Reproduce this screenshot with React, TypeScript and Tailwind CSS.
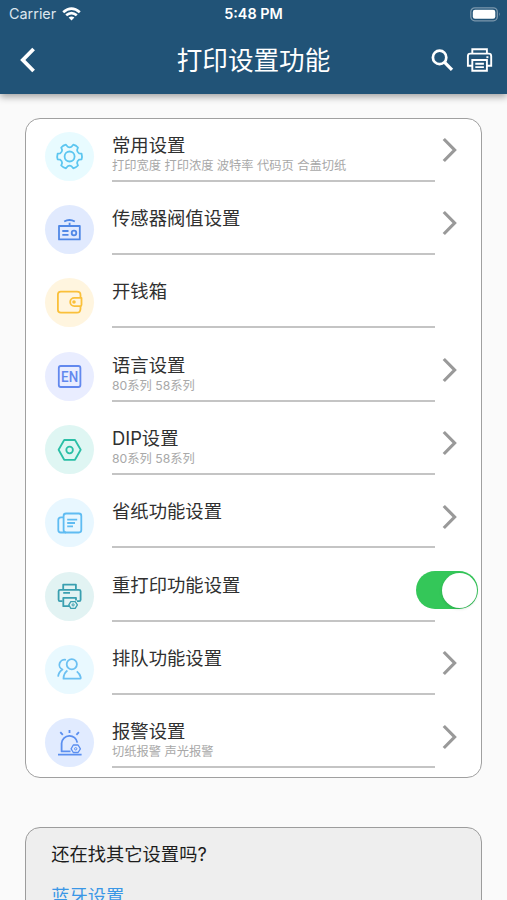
import type { ReactNode } from 'react';

type Row = {
  title: string;
  sub?: string;
  bg: string;
  color: string;
  icon: ReactNode;
  action?: 'arrow' | 'toggle';
};

// Closed outline of a six-toothed gear
function gearPath(cx: number, cy: number, outer: number, inner: number) {
  const pt = (deg: number, r: number) => {
    const a = (deg * Math.PI) / 180;
    return `${(cx + r * Math.cos(a)).toFixed(2)} ${(cy + r * Math.sin(a)).toFixed(2)}`;
  };
  let d = '';
  for (let i = 0; i < 6; i++) {
    const a = i * 60;
    d += `${i === 0 ? 'M' : 'L'}${pt(a - 19, inner)} L${pt(a - 13, outer)} Q${pt(a, outer + 0.5)} ${pt(a + 13, outer)} L${pt(a + 19, inner)} Q${pt(a + 30, inner - 1.2)} ${pt(a + 41, inner)} `;
  }
  return d + 'Z';
}

const ROWS: Row[] = [
  {
    title: '常用设置',
    sub: '打印宽度 打印浓度 波特率 代码页 合盖切纸',
    bg: 'bg-[#e8fbff]',
    color: 'text-[#5cc6f0]',
    action: 'arrow',
    icon: (
      <>
        <path d={gearPath(24.6, 24.5, 12.3, 9.9)} />
        <circle cx="24.6" cy="24.5" r="5" />
      </>
    ),
  },
  {
    title: '传感器阀值设置',
    bg: 'bg-[#e1eafe]',
    color: 'text-[#5088e6]',
    action: 'arrow',
    icon: (
      <>
        <rect x="14" y="21" width="20.8" height="13.4" />
        <path d="M19.2 16.6Q24.4 13.4 29.8 16.6M24.6 17.8V21M17.3 26H23.5M17.3 29.8H23.5" />
        <circle cx="29" cy="28" r="2.3" />
      </>
    ),
  },
  {
    title: '开钱箱',
    bg: 'bg-[#fff5df]',
    color: 'text-[#fac03a]',
    icon: (
      <>
        <path d="M35.5 19.8V17Q35.5 13.7 32 13.7H15.8Q12.9 13.7 12.9 16.6V31.8Q12.9 34.7 15.8 34.7H32Q35.2 34.7 35.5 31V28.2" />
        <path d="M36.5 19.9H29.3A4.1 4.1 0 0 0 29.3 28.1H35.3Q36.5 28.1 36.5 26.8Z" />
        <circle cx="29" cy="24" r="0.9" />
      </>
    ),
  },
  {
    title: '语言设置',
    sub: '80系列 58系列',
    bg: 'bg-[#e9edff]',
    color: 'text-[#6288ee]',
    action: 'arrow',
    icon: (
      <>
        <rect x="13.8" y="14" width="21.6" height="21" rx="2" />
        <text
          x="24.6"
          y="29.7"
          textAnchor="middle"
          fill="currentColor"
          stroke="none"
          textLength="17"
          lengthAdjust="spacingAndGlyphs"
          className="font-['Roboto',sans-serif] text-[14.5px] font-medium"
        >
          EN
        </text>
      </>
    ),
  },
  {
    title: 'DIP设置',
    sub: '80系列 58系列',
    bg: 'bg-[#dff6f3]',
    color: 'text-[#2bbfa6]',
    action: 'arrow',
    icon: (
      <>
        <path d="M19.2 15H30L35.7 24.8L30 34.8H19.2L13.6 24.8Z" />
        <circle cx="24.6" cy="25" r="3.3" />
      </>
    ),
  },
  {
    title: '省纸功能设置',
    bg: 'bg-[#e8f7ff]',
    color: 'text-[#5fbcf2]',
    action: 'arrow',
    icon: (
      <>
        <rect x="18.6" y="15.5" width="17.7" height="19" rx="2.4" />
        <path d="M18.5 19.3H16Q13.3 19.3 13.3 22V32Q13.3 34.5 15.8 34.5H21M22.2 21.6H32.2M22.2 25H30M22.2 28.3H28" />
      </>
    ),
  },
  {
    title: '重打印功能设置',
    bg: 'bg-[#e2f3f3]',
    color: 'text-[#3a9fb0]',
    action: 'toggle',
    icon: (
      <>
        <path d="M18.2 17.8V12.6H30.9V17.8M17.5 29.2H14.9Q13.6 29.2 13.6 27.8V19.2Q13.6 17.8 15 17.8H34Q35.6 17.8 35.6 19.3V27.7Q35.6 29.2 34.2 29.2H32M18.2 20.9H25" />
        <path d="M24 34.2H18.3V25.8H31V28.6" />
        <path strokeWidth="1.3" d="M25.8 29.6H30.2L32.4 32.9L30.2 36.3H25.8L23.8 32.9Z" />
        <circle cx="28.1" cy="32.9" r="1.1" strokeWidth="1" />
      </>
    ),
  },
  {
    title: '排队功能设置',
    bg: 'bg-[#e9f9ff]',
    color: 'text-[#6bc0f2]',
    action: 'arrow',
    icon: (
      <>
        <circle cx="26.8" cy="19.3" r="5.1" />
        <path d="M22.4 25.6Q18.6 28.3 18.5 33.7H35.2Q36 33.7 35.6 32Q34.8 28.8 31.8 26.4" />
        <path d="M20.9 14.9A5.1 5.1 0 0 0 17.5 24.5Q13.6 26.8 13.1 31.6" />
      </>
    ),
  },
  {
    title: '报警设置',
    sub: '切纸报警 声光报警',
    bg: 'bg-[#e1ebff]',
    color: 'text-[#5b8ff0]',
    action: 'arrow',
    icon: (
      <>
        <path d="M25.5 33.4H16.6V25.2A7.9 7.9 0 0 1 32.3 24.6M13 36.6H36.6M24.5 12V15M15.3 14.2L17.8 16.9M33.9 14.2L31.4 16.9" />
        <path strokeWidth="1.3" d="M28.3 27H33.1L35.4 30.8L33.1 34.5H28.3L26.1 30.8Z" />
        <circle cx="30.7" cy="30.8" r="1.2" strokeWidth="1" />
      </>
    ),
  },
];

export default function PrintSettings() {
  return (
    <div className="h-[900px] w-[507px] overflow-hidden bg-[#fafafa] font-['Inter','Noto_Sans_CJK_SC',sans-serif]">
      <Header />

      <div className="mt-[24.4px] ml-[25.2px] h-[659.4px] w-[457.2px] rounded-[15px] border border-[#a0a0a0] bg-white p-px">
        {ROWS.map(row => (
          <SettingRow key={row.title} row={row} />
        ))}
      </div>

      <div className="mt-[49.2px] ml-[25.2px] h-[160px] w-[457.2px] rounded-[15px] border border-[#9c9c9c] bg-[#eeeeee] pt-[12.6px] pl-[25px]">
        <p className="text-[18.3px] leading-[27px] text-[#1c1c1c]">还在找其它设置吗?</p>
        <p className="mt-[15px] text-[18.3px] leading-[27px] text-[#3a97e6]">蓝牙设置</p>
      </div>
    </div>
  );
}

function Header() {
  return (
    <header className="relative h-[94px] bg-[#215377] text-white shadow-[0_3px_7px_rgba(0,0,0,0.35)]">
      {/* Status bar */}
      <div className="grid h-[28px] grid-cols-3 items-center">
        <div className="flex items-center gap-[6px] pl-[9px]">
          <span className="text-[14.4px] leading-none text-[#dce6ee]">Carrier</span>
          <svg width="19" height="14" viewBox="0 0 19 14" fill="none" stroke="currentColor" strokeWidth="2.7">
            <path d="M1.2 5.2Q9.5 -2 17.8 5.2M4.2 8.3Q9.5 3.8 14.8 8.3" />
            <path d="M6.6 10.6Q9.5 8.3 12.4 10.6L9.5 13.6Z" fill="currentColor" stroke="none" />
          </svg>
        </div>
        <span className="text-center text-[14.4px] leading-none font-semibold">5:48 PM</span>
        <div className="flex justify-end pr-[6px]">
          <svg width="31" height="15" viewBox="0 0 31 15" fill="none">
            <rect x="0.8" y="0.8" width="26.5" height="13" rx="4" stroke="#7c98ad" strokeWidth="1.3" />
            <rect x="2.8" y="2.8" width="22.5" height="9" rx="2.2" fill="white" />
            <path d="M29 5.2Q30.8 7.3 29 9.4Z" fill="#7c98ad" />
          </svg>
        </div>
      </div>

      {/* Title bar */}
      <div className="grid h-[64px] grid-cols-[1fr_auto_1fr] items-center">
        <svg className="ml-[19px]" width="18" height="26" viewBox="0 0 18 26" fill="none" stroke="currentColor" strokeWidth="3.8">
          <path d="M14.6 2L3.8 13L14.6 24" />
        </svg>
        <h1 className="pt-[2px] text-[25.6px] leading-none">打印设置功能</h1>
        <div className="flex items-center justify-end pr-[14px]">
          <svg className="mr-[12px]" width="23" height="23" viewBox="0 0 23 23" fill="none" stroke="currentColor">
            <circle cx="8.6" cy="8.4" r="6.7" strokeWidth="2.7" />
            <path d="M13.4 13.2L21 20.8" strokeWidth="3.3" />
          </svg>
          <svg width="27" height="26" viewBox="0 0 27 26" fill="none" stroke="currentColor" strokeWidth="1.9">
            <path d="M6.3 6.2V2.2H20.9V6.2M6.2 18.8H1.9V9Q1.9 6.6 4.3 6.6H22.8Q25.2 6.6 25.2 9V18.8H20.9" />
            <path d="M6.3 13H20.9V23.8H6.3ZM9.3 16.8H17.9M9.3 20.1H17.9" />
            <path d="M20.4 10.2H22.4" />
          </svg>
        </div>
      </div>
    </header>
  );
}

function SettingRow({ row }: { row: Row }) {
  return (
    <div className="flex h-[73.33px] items-start pl-[17.8px]">
      <div className={`mt-[11.3px] h-[49px] w-[49px] shrink-0 rounded-full ${row.bg} ${row.color}`}>
        <svg viewBox="0 0 49 49" fill="none" stroke="currentColor" strokeWidth="1.8" strokeLinejoin="round">
          {row.icon}
        </svg>
      </div>
      <div className="ml-[18px] h-[61.4px] w-[323px] shrink-0 border-b-2 border-[#c4c4c4] pt-[11.4px]">
        <div className="text-[18.35px] leading-[26px] text-[#303030]">{row.title}</div>
        {row.sub && <div className="text-[12.25px] leading-[15px] text-[#a8a8a8]">{row.sub}</div>}
      </div>
      {row.action === 'arrow' && (
        <svg className="mt-[16.5px] ml-[7px] shrink-0" width="16" height="26" viewBox="0 0 16 26" fill="none" stroke="#999999" strokeWidth="3.2">
          <path d="M1.8 2L12.6 13L1.8 24" />
        </svg>
      )}
      {row.action === 'toggle' && (
        <div className="mt-[11px] ml-[-19px] flex h-[38px] w-[62.5px] shrink-0 items-center justify-end rounded-full bg-[#34c759] pr-[1.5px]">
          <div className="h-[35px] w-[35px] rounded-full bg-white shadow-[0_1px_3px_rgba(0,0,0,0.15)]" />
        </div>
      )}
    </div>
  );
}
